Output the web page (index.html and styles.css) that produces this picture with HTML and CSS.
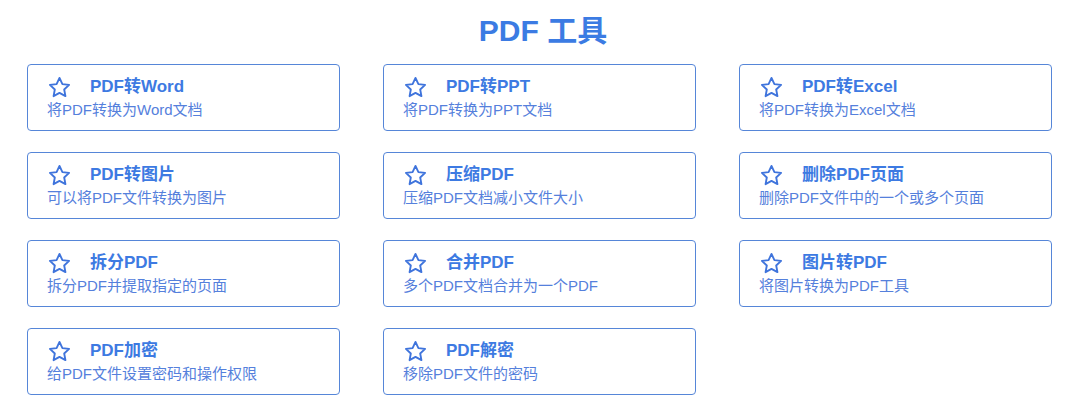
FILE: index.html
```html
<!DOCTYPE html>
<html lang="zh">
<head>
<meta charset="utf-8">
<title>PDF 工具</title>
<link rel="stylesheet" href="styles.css">
</head>
<body>
<h1 class="page-title">PDF 工具</h1>
<div class="tools">
  <div class="card"><div class="card-head"><svg class="star" viewBox="0 0 24 24"><path d="M12 2.8l2.8 5.9 6.4.8-4.7 4.4 1.2 6.4L12 17.2l-5.7 3.1 1.2-6.4-4.7-4.4 6.4-.8z"/></svg><span class="card-title">PDF转Word</span></div><div class="card-desc">将PDF转换为Word文档</div></div>
  <div class="card"><div class="card-head"><svg class="star" viewBox="0 0 24 24"><path d="M12 2.8l2.8 5.9 6.4.8-4.7 4.4 1.2 6.4L12 17.2l-5.7 3.1 1.2-6.4-4.7-4.4 6.4-.8z"/></svg><span class="card-title">PDF转PPT</span></div><div class="card-desc">将PDF转换为PPT文档</div></div>
  <div class="card"><div class="card-head"><svg class="star" viewBox="0 0 24 24"><path d="M12 2.8l2.8 5.9 6.4.8-4.7 4.4 1.2 6.4L12 17.2l-5.7 3.1 1.2-6.4-4.7-4.4 6.4-.8z"/></svg><span class="card-title">PDF转Excel</span></div><div class="card-desc">将PDF转换为Excel文档</div></div>
  <div class="card"><div class="card-head"><svg class="star" viewBox="0 0 24 24"><path d="M12 2.8l2.8 5.9 6.4.8-4.7 4.4 1.2 6.4L12 17.2l-5.7 3.1 1.2-6.4-4.7-4.4 6.4-.8z"/></svg><span class="card-title">PDF转图片</span></div><div class="card-desc">可以将PDF文件转换为图片</div></div>
  <div class="card"><div class="card-head"><svg class="star" viewBox="0 0 24 24"><path d="M12 2.8l2.8 5.9 6.4.8-4.7 4.4 1.2 6.4L12 17.2l-5.7 3.1 1.2-6.4-4.7-4.4 6.4-.8z"/></svg><span class="card-title">压缩PDF</span></div><div class="card-desc">压缩PDF文档减小文件大小</div></div>
  <div class="card"><div class="card-head"><svg class="star" viewBox="0 0 24 24"><path d="M12 2.8l2.8 5.9 6.4.8-4.7 4.4 1.2 6.4L12 17.2l-5.7 3.1 1.2-6.4-4.7-4.4 6.4-.8z"/></svg><span class="card-title">删除PDF页面</span></div><div class="card-desc">删除PDF文件中的一个或多个页面</div></div>
  <div class="card"><div class="card-head"><svg class="star" viewBox="0 0 24 24"><path d="M12 2.8l2.8 5.9 6.4.8-4.7 4.4 1.2 6.4L12 17.2l-5.7 3.1 1.2-6.4-4.7-4.4 6.4-.8z"/></svg><span class="card-title">拆分PDF</span></div><div class="card-desc">拆分PDF并提取指定的页面</div></div>
  <div class="card"><div class="card-head"><svg class="star" viewBox="0 0 24 24"><path d="M12 2.8l2.8 5.9 6.4.8-4.7 4.4 1.2 6.4L12 17.2l-5.7 3.1 1.2-6.4-4.7-4.4 6.4-.8z"/></svg><span class="card-title">合并PDF</span></div><div class="card-desc">多个PDF文档合并为一个PDF</div></div>
  <div class="card"><div class="card-head"><svg class="star" viewBox="0 0 24 24"><path d="M12 2.8l2.8 5.9 6.4.8-4.7 4.4 1.2 6.4L12 17.2l-5.7 3.1 1.2-6.4-4.7-4.4 6.4-.8z"/></svg><span class="card-title">图片转PDF</span></div><div class="card-desc">将图片转换为PDF工具</div></div>
  <div class="card"><div class="card-head"><svg class="star" viewBox="0 0 24 24"><path d="M12 2.8l2.8 5.9 6.4.8-4.7 4.4 1.2 6.4L12 17.2l-5.7 3.1 1.2-6.4-4.7-4.4 6.4-.8z"/></svg><span class="card-title">PDF加密</span></div><div class="card-desc">给PDF文件设置密码和操作权限</div></div>
  <div class="card"><div class="card-head"><svg class="star" viewBox="0 0 24 24"><path d="M12 2.8l2.8 5.9 6.4.8-4.7 4.4 1.2 6.4L12 17.2l-5.7 3.1 1.2-6.4-4.7-4.4 6.4-.8z"/></svg><span class="card-title">PDF解密</span></div><div class="card-desc">移除PDF文件的密码</div></div>
</div>
</body>
</html>
```
FILE: styles.css
```css
html, body {
  margin: 0;
  padding: 0;
  background: #ffffff;
}
body {
  font-family: "Liberation Sans", "Noto Sans CJK SC", sans-serif;
  width: 1086px;
  height: 413px;
  overflow: hidden;
}
.page-title {
  margin: 0;
  padding: 11px 0 13px 0;
  height: 64px;
  box-sizing: border-box;
  line-height: 40px;
  font-size: 30px;
  font-weight: bold;
  text-align: center;
  color: #3b7be3;
}
.tools {
  display: grid;
  grid-template-columns: repeat(3, 313px);
  column-gap: 43px;
  row-gap: 21px;
  padding-left: 27px;
}
.card {
  box-sizing: border-box;
  height: 67px;
  border: 1px solid #5686d8;
  border-radius: 4px;
  padding: 10px 20px 10px 19px;
  background: #fff;
}
.card-head {
  display: flex;
  align-items: center;
  height: 24px;
}
.star {
  width: 25px;
  height: 25px;
  fill: none;
  stroke: #3f74dc;
  stroke-width: 1.8;
  stroke-linejoin: round;
  flex: none;
}
.card-title {
  margin-left: 18px;
  font-size: 17px;
  font-weight: bold;
  color: #3d7ae2;
  line-height: 24px;
}
.card-desc {
  margin-top: 0;
  font-size: 15px;
  line-height: 21px;
  color: #5580dc;
}
```
